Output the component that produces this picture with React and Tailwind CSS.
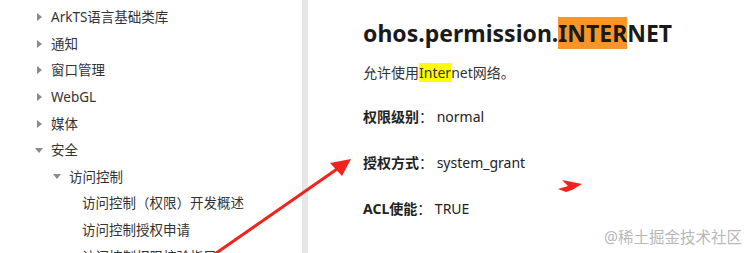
import React from 'react';

const font = { fontFamily: '"Noto Sans", "Noto Sans CJK SC", sans-serif' };

const Caret = ({ open }) => (
  <span className="w-[10px] flex items-center justify-center">
    {open ? (
      <svg width="8" height="5" viewBox="0 0 8 5"><path d="M0 0 L8 0 L4 5 Z" fill="#8a8a8a" /></svg>
    ) : (
      <svg width="5" height="8" viewBox="0 0 5 8"><path d="M0 0 L5 4 L0 8 Z" fill="#8a8a8a" /></svg>
    )}
  </span>
);

const navItems = [
  { label: 'ArkTS语言基础类库', level: 0 },
  { label: '通知', level: 0 },
  { label: '窗口管理', level: 0 },
  { label: 'WebGL', level: 0 },
  { label: '媒体', level: 0 },
  { label: '安全', level: 0, open: true },
  { label: '访问控制', level: 1, open: true },
  { label: '访问控制（权限）开发概述', level: 2, leaf: true },
  { label: '访问控制授权申请', level: 2, leaf: true },
  { label: '访问控制权限校验指导', level: 2, leaf: true },
];

const indent = ['pl-[34px]', 'pl-[52px]', 'pl-[82px]'];

const Sidebar = () => (
  <div className="w-[302px] shrink-0 pt-[4px] overflow-hidden">
    {navItems.map((item) => (
      <div key={item.label} className={`h-[26.6px] flex items-center gap-[7px] text-[13.5px] text-[#333] ${indent[item.level]}`}>
        {!item.leaf && <Caret open={item.open} />}
        <span className="whitespace-nowrap">{item.label}</span>
      </div>
    ))}
  </div>
);

const Field = ({ label, value }) => (
  <div className="text-[14px] text-[#222] h-[46px] flex items-center">
    <span className="font-bold">{label}</span>
    <span>：{value}</span>
  </div>
);

export default function App() {
  return (
    <div className="relative w-[747px] h-[253px] bg-white overflow-hidden flex" style={font}>
      <Sidebar />
      <div className="w-[6px] shrink-0 bg-[#e6e6e6]" />
      <div className="flex-1 pl-[55px] pt-[16px]">
        <h1 className="text-[23px] font-bold text-[#1a1a1a] leading-[34px] whitespace-nowrap">
          ohos.permission.<span className="bg-[#f7952a]">INTER</span>NET
        </h1>
        <p className="mt-[13px] text-[14px] text-[#333] leading-[20px]">
          允许使用<span className="bg-[#ffff00]">Inter</span>net网络。
        </p>
        <div className="mt-[10px]">
          <Field label="权限级别" value=" normal" />
          <Field label="授权方式" value=" system_grant" />
          <Field label="ACL使能" value=" TRUE" />
        </div>
      </div>

      <svg className="absolute left-0 top-0 pointer-events-none" width="747" height="253" viewBox="0 0 747 253">
        <line x1="212" y1="256" x2="340" y2="167" stroke="#f2231d" strokeWidth="3" strokeLinecap="round" />
        <path d="M351 159 L330 163 L342 176 Z" fill="#f2231d" />
        <path d="M582 184 L562 180 L568 186 L558 189 L566 192 L572 190 Z" fill="#f2231d" />
      </svg>

      <div className="absolute right-[5px] bottom-[4px] text-[15.5px] text-[#b8b8b8]">@稀土掘金技术社区</div>
    </div>
  );
}
